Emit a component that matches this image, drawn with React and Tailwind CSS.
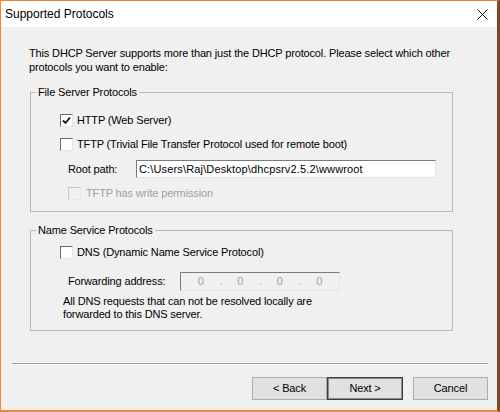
import React from "react";

const font = { fontFamily: '"Liberation Sans", Arial, sans-serif' };

function CheckBox({ checked, disabled }) {
  return (
    <span
      className={
        "w-[13px] h-[13px] shrink-0 flex items-center justify-center border border-t-[#6a6a6a] border-l-[#6a6a6a] border-r-[#e6e6e6] border-b-[#e6e6e6] " +
        (disabled ? "bg-[#f0f0f0] border-t-[#c8c8c8] border-l-[#c8c8c8]" : "bg-white")
      }
    >
      {checked && (
        <svg width="9" height="9" viewBox="0 0 9 9">
          <path d="M1 4.5 L3.5 7 L8 1.5" fill="none" stroke="#111" strokeWidth="1.8" />
        </svg>
      )}
    </span>
  );
}

function Option({ checked, disabled, children, gap = "gap-[4px]" }) {
  return (
    <div className={"flex items-center h-[16px] " + gap}>
      <CheckBox checked={checked} disabled={disabled} />
      <span className={disabled ? "text-[#a0a0a0]" : "text-black"}>{children}</span>
    </div>
  );
}

function Group({ title, children, className }) {
  return (
    <fieldset className={"border border-[#b9b9b9] w-[423px] ml-[1px] " + className}>
      <legend className="ml-[5px] px-[2px] leading-[14px]">{title}</legend>
      {children}
    </fieldset>
  );
}

export default function App() {
  return (
    <div
      className="w-[500px] h-[412px] flex flex-col border-t border-l border-b-2 border-r-[3px] border-t-[#e8873f] border-l-[#e8873f] border-b-[#e8873f] border-r-[#86451f] bg-[#f0f0f0] text-[11px] tracking-[-0.15px] text-black overflow-hidden"
      style={font}
    >
      {/* title bar */}
      <div className="h-[26px] bg-white flex items-center justify-between pl-[4px] pr-[9px] shrink-0">
        <span className="text-[12px] tracking-normal">Supported Protocols</span>
        <svg width="11" height="11" viewBox="0 0 11 11">
          <path d="M0.5 0.5 L10.5 10.5 M10.5 0.5 L0.5 10.5" stroke="#111" strokeWidth="1" />
        </svg>
      </div>

      <div className="flex-1 flex flex-col pt-[19px] pl-[28px] pr-[9px]">
        <p className="leading-[14px] whitespace-nowrap">
          This DHCP Server supports more than just the DHCP protocol. Please select which other
          <br />
          protocols you want to enable:
        </p>

        <Group title="File Server Protocols" className="mt-[11px] h-[127px]">
          <div className="flex flex-col pl-[29px] pt-[13px]">
            <Option checked>HTTP (Web Server)</Option>
            <div className="mt-[8px]">
              <Option>TFTP (Trivial File Transfer Protocol used for remote boot)</Option>
            </div>
            <div className="mt-[8px] ml-[8px] flex items-center h-[18px]">
              <span className="w-[68px]">Root path:</span>
              <div className="w-[300px] h-[18px] bg-white border border-t-[#7a7a7a] border-l-[#7a7a7a] border-r-[#e3e3e3] border-b-[#e3e3e3] flex items-center px-[2px] whitespace-nowrap tracking-[0.15px]">
                C:\Users\Raj\Desktop\dhcpsrv2.5.2\wwwroot
              </div>
            </div>
            <div className="mt-[7px] ml-[8px]">
              <Option disabled gap="gap-[5px]">TFTP has write permission</Option>
            </div>
          </div>
        </Group>

        <Group title="Name Service Protocols" className="mt-[11px] h-[108px]">
          <div className="flex flex-col pl-[29px] pt-[7px]">
            <Option>DNS (Dynamic Name Service Protocol)</Option>
            <div className="mt-[12px] ml-[8px] flex items-center h-[19px]">
              <span className="w-[112px]">Forwarding address:</span>
              <div className="w-[160px] h-[19px] bg-[#f0f0f0] border border-t-[#7a7a7a] border-l-[#7a7a7a] border-r-[#e3e3e3] border-b-[#e3e3e3] grid grid-cols-4 text-[#a0a0a0]">
                <span className="text-center relative">0<span className="absolute right-[-2px]">.</span></span>
                <span className="text-center relative">0<span className="absolute right-[-2px]">.</span></span>
                <span className="text-center relative">0<span className="absolute right-[-2px]">.</span></span>
                <span className="text-center">0</span>
              </div>
            </div>
            <p className="mt-[4px] ml-[3px] leading-[13px] whitespace-nowrap">
              All DNS requests that can not be resolved locally are
              <br />
              forwarded to this DNS server.
            </p>
          </div>
        </Group>

        <div className="mt-[32px] -ml-[17px] border-t border-t-[#a0a0a0] border-b border-b-white" />

        <div className="mt-[12px] flex justify-end">
          <button className="w-[75px] h-[23px] bg-[#e1e1e1] border border-[#adadad] font-normal">
            &lt; Back
          </button>
          <button className="w-[76px] h-[23px] bg-[#e1e1e1] border border-[#3c3c3c] shadow-[inset_0_0_0_1px_#8a8a8a] font-normal">
            Next &gt;
          </button>
          <button className="w-[75px] h-[23px] ml-[10px] bg-[#e1e1e1] border border-[#adadad] font-normal">
            Cancel
          </button>
        </div>
      </div>
    </div>
  );
}
